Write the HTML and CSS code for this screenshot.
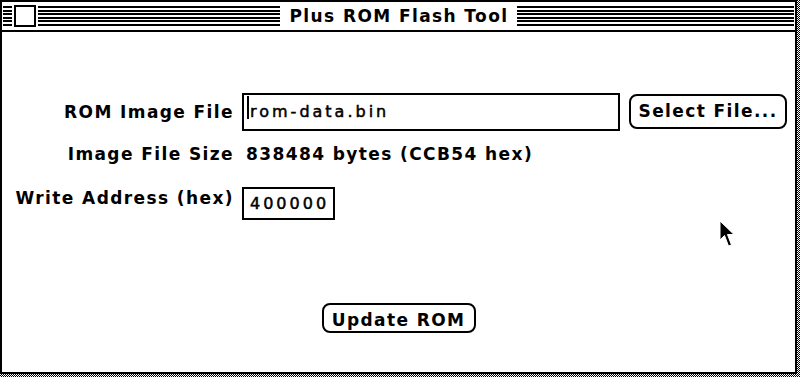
FILE: index.html
```html
<!DOCTYPE html>
<html>
<head>
<meta charset="utf-8">
<title>Plus ROM Flash Tool</title>
<link rel="stylesheet" href="styles.css">
</head>
<body>
<div class="screen">
  <div class="window">
    <div class="titlebar">
      <div class="stripes"><span class="closebox"></span></div>
      <div class="title">Plus ROM Flash Tool</div>
      <div class="stripes"></div>
    </div>
    <div class="content">
      <div class="row row1">
        <span class="label">ROM Image File</span>
        <div class="field field-file"><span class="caret"></span>rom-data.bin</div>
        <button class="btn btn-select">Select File...</button>
      </div>
      <div class="row row2">
        <span class="label">Image File Size</span>
        <span class="value">838484 bytes (CCB54 hex)</span>
      </div>
      <div class="row row3">
        <span class="label">Write Address (hex)</span>
        <div class="field field-addr">400000</div>
      </div>
      <div class="actions">
        <button class="btn btn-update">Update ROM</button>
      </div>
    </div>
  </div>
  <svg class="pointer" width="17" height="28" viewBox="0 0 17 28">
    <path d="M1 1 L1 20 L5.5 15.5 L9.5 26 L12.5 25 L8.5 14.5 L15 14.5 Z" fill="#000" stroke="#fff" stroke-width="1"/>
  </svg>
</div>
</body>
</html>
```
FILE: styles.css
```css
html, body {
  margin: 0;
  padding: 0;
  background: #fff;
}

body {
  font-family: "DejaVu Sans", "Liberation Sans", sans-serif;
  color: #000;
}

.screen {
  position: relative;
  width: 800px;
  height: 377px;
  overflow: hidden;
  background: repeating-conic-gradient(#000 0 25%, #fff 0 50%) 0 0 / 2px 2px;
}

.window {
  box-sizing: border-box;
  width: 797px;
  height: 374px;
  border: 2px solid #000;
  background: #fff;
  display: flex;
  flex-direction: column;
}

.titlebar {
  height: 28px;
  border-bottom: 2px solid #000;
  padding: 0 1px;
  display: grid;
  grid-template-columns: 1fr auto 1fr;
  align-items: center;
}

.stripes {
  height: 20px;
  display: flex;
  align-items: center;
  background: linear-gradient(#000 0 2px, #fff 2px 4px, #000 4px 6px, #fff 6px 7px,
    #000 7px 9px, #fff 9px 11px, #000 11px 13px, #fff 13px 14px,
    #000 14px 16px, #fff 16px 18px, #000 18px 20px);
}

.closebox {
  width: 18px;
  height: 18px;
  flex: none;
  border: 2px solid #000;
  background: #fff;
  box-shadow: 0 0 0 2px #fff;
  margin-left: 11px;
}

.title {
  font-weight: bold;
  font-size: 17px;
  letter-spacing: 1.4px;
  line-height: 20px;
  padding: 0 9px 0 10px;
  white-space: nowrap;
}

.content {
  flex: 1;
  padding-top: 61px;
}

.row {
  display: flex;
  align-items: flex-start;
}

.label,
.value {
  font-weight: bold;
  font-size: 17px;
  letter-spacing: 1.4px;
  white-space: nowrap;
}

.label {
  width: 232px;
  flex: none;
  text-align: right;
}

.field {
  box-sizing: border-box;
  flex: none;
  border: 2px solid #000;
  font-size: 16px;
  letter-spacing: 3px;
  -webkit-text-stroke: 0.5px #000;
  white-space: nowrap;
  margin-left: 8px;
}

.row1 {
  height: 38px;
}

.row1 .label {
  line-height: 38px;
}

.field-file {
  width: 378px;
  height: 38px;
  line-height: 34px;
  padding-left: 3px;
}

.caret {
  display: inline-block;
  width: 2px;
  height: 23px;
  background: #000;
  vertical-align: -2px;
  margin-right: 1px;
}

.btn {
  box-sizing: border-box;
  font-family: inherit;
  font-weight: bold;
  font-size: 17px;
  letter-spacing: 1.4px;
  color: #000;
  background: #fff;
  border: 2px solid #000;
  border-radius: 8px;
  padding: 0;
  white-space: nowrap;
}

.btn-select {
  width: 158px;
  height: 35px;
  line-height: 31px;
  margin-left: 9px;
  margin-top: 1px;
}

.row2 {
  margin-top: 13px;
  height: 20px;
  line-height: 20px;
}

.value {
  margin-left: 12px;
}

.row3 {
  margin-top: 23px;
  height: 33px;
}

.row3 .label {
  line-height: 23px;
}

.field-addr {
  width: 93px;
  height: 33px;
  line-height: 29px;
  padding-left: 6px;
}

.actions {
  margin-top: 83px;
  display: flex;
  justify-content: center;
}

.btn-update {
  width: 154px;
  height: 30px;
  line-height: 20px;
  padding-top: 3px;
}

.pointer {
  position: absolute;
  left: 719px;
  top: 220px;
}
```
